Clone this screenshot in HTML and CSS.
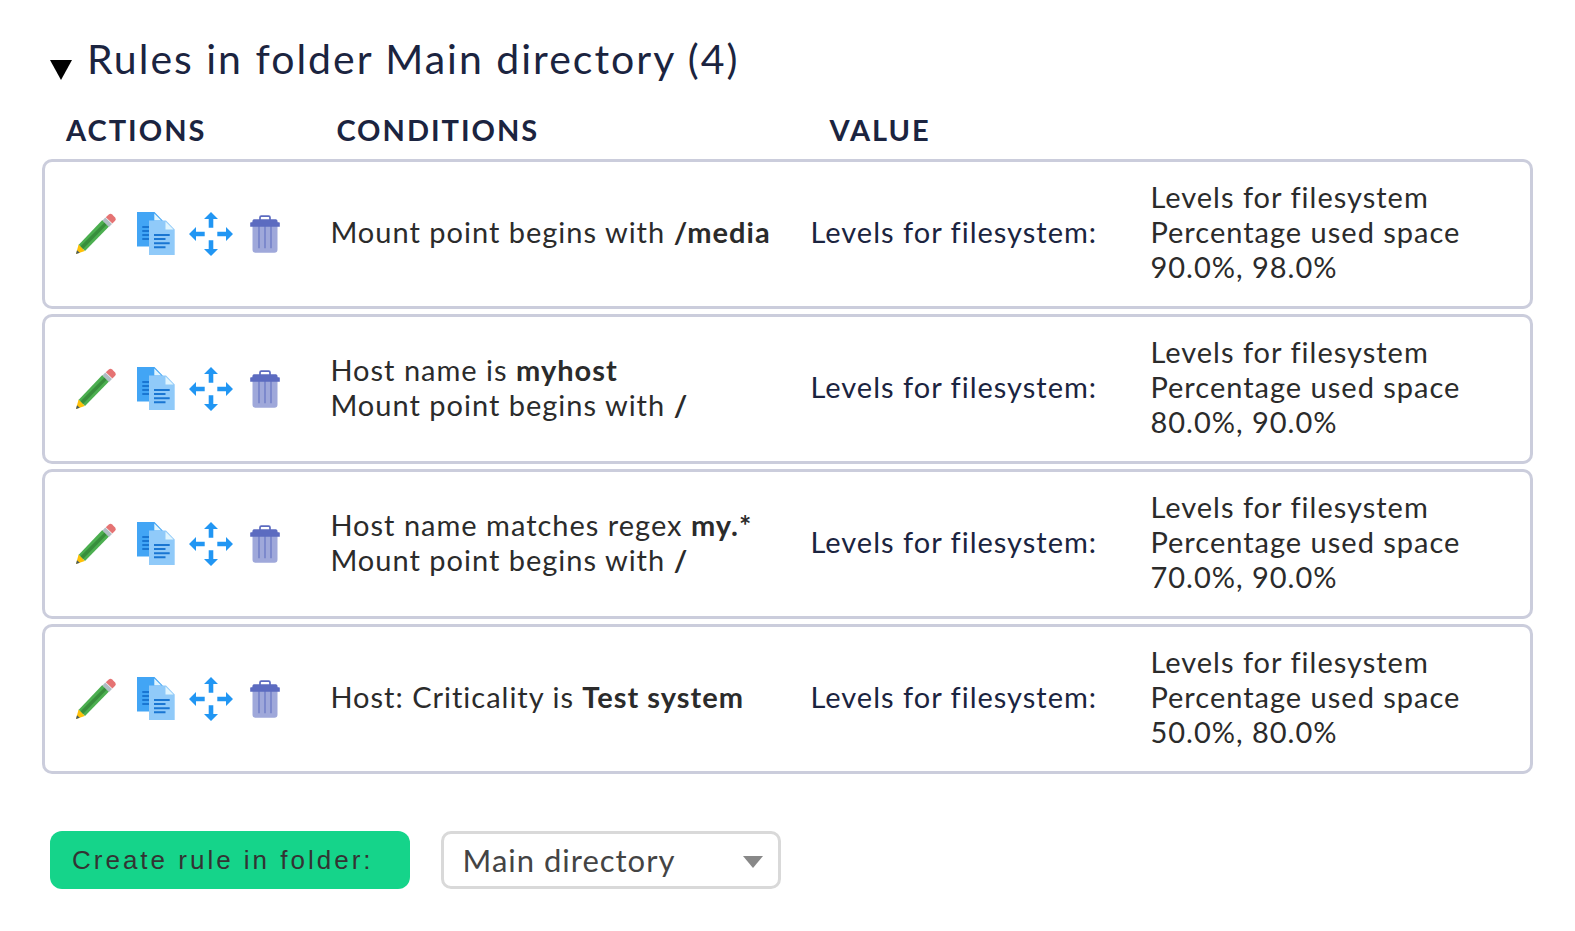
FILE: index.html
```html
<!DOCTYPE html>
<html lang="en">
<head>
<meta charset="utf-8">
<title>Rules in folder Main directory</title>
<link rel="stylesheet" href="styles.css">
</head>
<body>
<svg class="sprite" aria-hidden="true">
  <symbol id="edit" viewBox="0 0 52 52">
    <path fill="#4caf50" d="M32.300 12l6.700 6.500L15 43 8.500 37z"/>
    <path fill="#388e3c" d="M34.500 14.500l2.300 2.300L13 41l-2.700-2.500z"/>
    <path fill="#b0bec5" d="M35.300 9.500l6.700 6.500-3 3-6.600-6.500z"/>
    <path fill="#e57373" d="M38.500 6.700q2-1.700 3.700-.2l2.900 2.900q1.500 1.600 0 3.300l-2.700 2.900-6.600-6.300z"/>
    <path fill="#ffc107" d="M8.600 36.500l6.200 6.500L6 46z"/>
    <path fill="#455a64" d="M7 42.300l2.800 2.500L6 46z"/>
  </symbol>
  <symbol id="clone" viewBox="0 0 52 52">
    <path fill="#42a5f5" d="M11 4h17.500l8.200 8.500V38.500H11z"/>
    <path fill="#e1f5fe" d="M28.300 5.500l7 7h-7z"/>
    <path stroke="#1976d2" stroke-width="2" d="M16.300 19H24M16.300 23H24M16.300 27H24M16.300 31H24"/>
    <path fill="#90caf9" d="M23 12.500h17l8.700 9V47H23z"/>
    <path fill="#e1f5fe" d="M39.500 13.500l8 8h-8z"/>
    <path stroke="#1976d2" stroke-width="2" d="M28 27h15.700M28 31h11.500M28 35.300h15.700M28 39.300h11.500"/>
  </symbol>
  <symbol id="move" viewBox="0 0 52 52">
    <g fill="#2196f3">
      <path d="M29 4l7 7h-4.700v8.700h-4.600V11H22z"/>
      <path d="M29 48l7-7h-4.700v-8.700h-4.600V41H22z"/>
      <path d="M7 26l7-7v4.700h8.700v4.600H14V33z"/>
      <path d="M51 26l-7-7v4.700h-8.700v4.600H44V33z"/>
    </g>
  </symbol>
  <symbol id="delete" viewBox="0 0 52 52">
    <path fill="#9fa8da" d="M14.500 18h25v23.500q0 3.200-3.200 3.200H17.700q-3.200 0-3.200-3.200z"/>
    <path stroke="#7986cb" stroke-width="1.800" d="M21 18v22.300M27 18v22.300M33 18v22.300"/>
    <path fill="none" stroke="#5c6bc0" stroke-width="1.700" d="M22 12V9.500q0-1.300 1.300-1.300h7.400q1.300 0 1.300 1.300V12"/>
    <path fill="#5c6bc0" d="M16 11.300h22q1.600 0 1.700 3H41q.8 0 .8.800v3.600H12.200v-3.600q0-.8.800-.8h1.300q.1-3 1.700-3z"/>
  </symbol>
</svg>
<main class="page">
  <h1 class="title">
    <button class="toggle" type="button" aria-label="Collapse folder" aria-expanded="true"><svg class="triangle" viewBox="0 0 22 20"><path d="M0 0h22L11 20z"/></svg></button>
    <span>Rules in folder Main directory (4)</span>
  </h1>
  <table class="rules">
    <colgroup><col class="col-actions"><col class="col-conditions"><col class="col-value"><col></colgroup>
    <thead>
      <tr><th scope="col">Actions</th><th scope="col" class="head-conditions">Conditions</th><th scope="col" class="head-value" colspan="2">Value</th></tr>
    </thead>
    <tbody>
      <tr>
        <td><div class="actions"><button class="icon" type="button" aria-label="Edit"><svg><use href="#edit"/></svg></button><button class="icon" type="button" aria-label="Clone"><svg><use href="#clone"/></svg></button><button class="icon" type="button" aria-label="Move"><svg><use href="#move"/></svg></button><button class="icon" type="button" aria-label="Delete"><svg><use href="#delete"/></svg></button></div></td>
        <td>Mount point begins with <b>/media</b></td>
        <td class="name">Levels for filesystem:</td>
        <td>Levels for filesystem<br>Percentage used space<br>90.0%, 98.0%</td>
      </tr>
      <tr>
        <td><div class="actions"><button class="icon" type="button" aria-label="Edit"><svg><use href="#edit"/></svg></button><button class="icon" type="button" aria-label="Clone"><svg><use href="#clone"/></svg></button><button class="icon" type="button" aria-label="Move"><svg><use href="#move"/></svg></button><button class="icon" type="button" aria-label="Delete"><svg><use href="#delete"/></svg></button></div></td>
        <td>Host name is <b>myhost</b><br>Mount point begins with <b>/</b></td>
        <td class="name">Levels for filesystem:</td>
        <td>Levels for filesystem<br>Percentage used space<br>80.0%, 90.0%</td>
      </tr>
      <tr>
        <td><div class="actions"><button class="icon" type="button" aria-label="Edit"><svg><use href="#edit"/></svg></button><button class="icon" type="button" aria-label="Clone"><svg><use href="#clone"/></svg></button><button class="icon" type="button" aria-label="Move"><svg><use href="#move"/></svg></button><button class="icon" type="button" aria-label="Delete"><svg><use href="#delete"/></svg></button></div></td>
        <td>Host name matches regex <b>my.*</b><br>Mount point begins with <b>/</b></td>
        <td class="name">Levels for filesystem:</td>
        <td>Levels for filesystem<br>Percentage used space<br>70.0%, 90.0%</td>
      </tr>
      <tr>
        <td><div class="actions"><button class="icon" type="button" aria-label="Edit"><svg><use href="#edit"/></svg></button><button class="icon" type="button" aria-label="Clone"><svg><use href="#clone"/></svg></button><button class="icon" type="button" aria-label="Move"><svg><use href="#move"/></svg></button><button class="icon" type="button" aria-label="Delete"><svg><use href="#delete"/></svg></button></div></td>
        <td>Host: Criticality is <b>Test system</b></td>
        <td class="name">Levels for filesystem:</td>
        <td>Levels for filesystem<br>Percentage used space<br>50.0%, 80.0%</td>
      </tr>
    </tbody>
  </table>
  <form class="create">
    <button class="submit" type="button">Create rule in folder:</button>
    <div class="picker">
      <select class="folder" aria-label="Folder"><option>Main directory</option></select>
      <svg class="caret" viewBox="0 0 20 12" aria-hidden="true"><path d="M0 0h20L10 12z"/></svg>
    </div>
  </form>
</main>
</body>
</html>
```
FILE: styles.css
```css
* { box-sizing: border-box; }
body {
  margin: 0;
  background: #fff;
  color: #2b2b2b;
  font: 29px/35px Lato, sans-serif;
  letter-spacing: 1px;
}
button { font: inherit; border: 0; padding: 0; background: none; cursor: pointer; }
.sprite { display: none; }
.page { padding: 30px 42px; }
.title {
  display: flex;
  align-items: center;
  gap: 15px;
  margin: 0 0 0 8px;
  color: #1b2440;
  font-size: 41px;
  line-height: 58px;
  font-weight: 400;
  letter-spacing: 2px;
}
.toggle { display: flex; padding-top: 22px; }
.triangle { width: 22px; height: 20px; }
.rules {
  width: 100%;
  margin-top: 19px;
  table-layout: fixed;
  border-collapse: separate;
  border-spacing: 0 5px;
}
.col-actions { width: 18%; }
.col-conditions { width: 32%; }
.col-value { width: 23%; }
th {
  padding: 0 24px 7px;
  color: #1b2440;
  font-weight: 700;
  letter-spacing: 2px;
  text-align: left;
  text-transform: uppercase;
}
th.head-conditions { padding-left: 26px; }
th.head-value { padding-left: 42px; }
td {
  padding: 17px 0 22px 20px;
  border: solid #cbcddc;
  border-width: 3px 0;
  vertical-align: middle;
}
td:first-child { padding: 19px 0 20px 25px; border-left-width: 3px; border-radius: 10px 0 0 10px; }
td:last-child { border-right-width: 3px; border-radius: 0 10px 10px 0; }
td.name { padding-left: 23px; color: #1b2440; }
.actions { display: flex; gap: 4px; }
.icon { display: flex; }
.icon svg { width: 52px; height: 52px; }
.create { display: flex; gap: 31px; margin: 52px 0 0 8px; }
.submit {
  height: 58px;
  padding: 0 36px 0 22px;
  border-radius: 12px;
  background: #15d48a;
  color: #333;
  font: 26px "Liberation Sans", sans-serif;
  letter-spacing: 3px;
}
.picker { display: grid; align-items: center; }
.picker > * { grid-area: 1 / 1; }
.folder {
  appearance: none;
  width: 340px;
  height: 58px;
  padding: 0 48px 0 19px;
  border: 3px solid #d9d9d9;
  border-radius: 10px;
  background: #fff;
  color: #444;
  font: 31px Lato, sans-serif;
  letter-spacing: 1px;
}
.caret {
  justify-self: end;
  width: 20px;
  height: 12px;
  margin: 4px 18px 0 0;
  fill: #888;
  pointer-events: none;
}
```
